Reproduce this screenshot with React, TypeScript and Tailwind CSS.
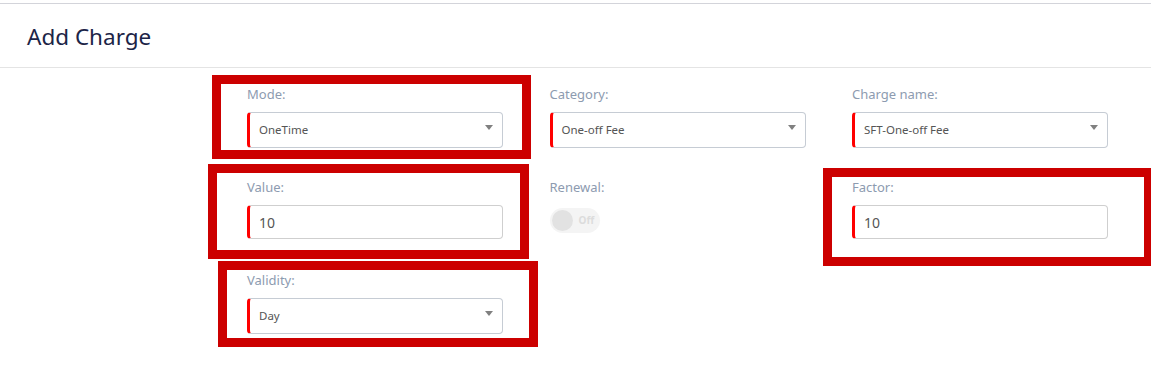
import React from "react";

const font = { fontFamily: '"Noto Sans", "Open Sans", sans-serif' };

function Caret() {
  return (
    <svg width="8" height="5" viewBox="0 0 8 5" className="absolute right-[9px] top-[12px]">
      <path d="M0 0 L8 0 L4 5 Z" fill="#808080" />
    </svg>
  );
}

function Label({ children }: { children: React.ReactNode }) {
  return <label className="text-[13px] leading-[18px] text-[#8d9bb0] mb-[9px]">{children}</label>;
}

function SelectField({ label, value }: { label: string; value: string }) {
  return (
    <div className="flex flex-col h-[63px]">
      <Label>{label}</Label>
      <div className="relative h-[36px] rounded-[4px] border border-[#c6ccd4] border-l-[3px] border-l-[#ff0000] bg-white flex items-center pl-[9px]">
        <span className="text-[11.5px] text-[#555]">{value}</span>
        <Caret />
      </div>
    </div>
  );
}

function InputField({ label, value }: { label: string; value: string }) {
  return (
    <div className="flex flex-col h-[63px]">
      <Label>{label}</Label>
      <div className="h-[34px] rounded-[4px] border border-[#cfcfcf] border-l-[3px] border-l-[#ff0000] bg-white flex items-center pl-[9px]">
        <span className="text-[14px] text-[#555]">{value}</span>
      </div>
    </div>
  );
}

function Toggle({ label }: { label: string }) {
  return (
    <div className="flex flex-col h-[63px]">
      <Label>{label}</Label>
      <div className="mt-[3px] w-[50px] h-[25px] rounded-full bg-[#f4f4f4] flex items-center pl-[2px] gap-[6px]">
        <div className="w-[21px] h-[21px] rounded-full bg-[#e2e2e2]" />
        <span className="text-[10px] font-bold text-[#dcdcdc]">Off</span>
      </div>
    </div>
  );
}

export default function App() {
  return (
    <div className="relative w-[1151px] h-[371px] bg-white overflow-hidden" style={font}>
      <div className="h-[3px]" />
      <div className="border-t border-[#d3d4da] border-b border-b-[#e4e4e4] h-[65px] flex items-center pl-[27px]">
        <h1 className="text-[22.5px] text-[#1c2447] leading-none pt-[3px]">Add Charge</h1>
      </div>
      <div className="pl-[247px] pt-[17px] grid grid-cols-[256px_256px_256px] gap-x-[46.5px] gap-y-[30px]">
        <SelectField label="Mode:" value="OneTime" />
        <SelectField label="Category:" value="One-off Fee" />
        <SelectField label="Charge name:" value="SFT-One-off Fee" />
        <InputField label="Value:" value="10" />
        <Toggle label="Renewal:" />
        <InputField label="Factor:" value="10" />
        <SelectField label="Validity:" value="Day" />
      </div>

      {/* annotation boxes */}
      <div className="absolute left-[212px] top-[75px] w-[319px] h-[84px] border-[9px] border-[#cc0000]" />
      <div className="absolute left-[208px] top-[164px] w-[321px] h-[95px] border-[9px] border-[#cc0000]" />
      <div className="absolute left-[823px] top-[168px] w-[330px] h-[98px] border-[9px] border-[#cc0000]" />
      <div className="absolute left-[218px] top-[261px] w-[320px] h-[86px] border-[9px] border-[#cc0000]" />
    </div>
  );
}
